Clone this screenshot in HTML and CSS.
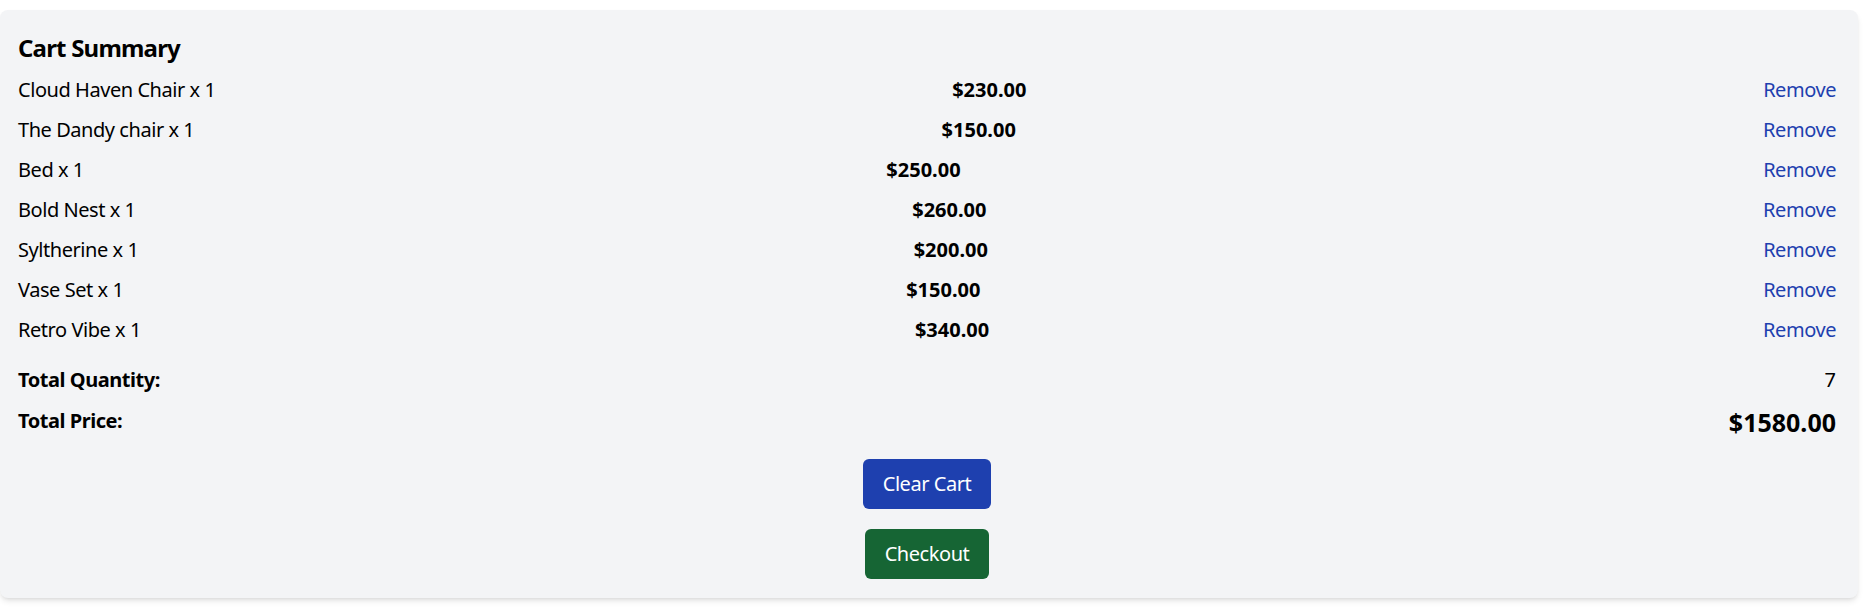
FILE: index.html
```html
<!DOCTYPE html>
<html lang="en">
<head>
<meta charset="utf-8">
<title>Cart Summary</title>
<link rel="stylesheet" href="styles.css">
</head>
<body>
<div class="card">
  <h2 class="title">Cart Summary</h2>
  <ul class="items">
    <li class="item"><span class="name">Cloud Haven Chair x 1</span><span class="price">$230.00</span><a class="remove" href="#">Remove</a></li>
    <li class="item"><span class="name">The Dandy chair x 1</span><span class="price">$150.00</span><a class="remove" href="#">Remove</a></li>
    <li class="item"><span class="name">Bed x 1</span><span class="price">$250.00</span><a class="remove" href="#">Remove</a></li>
    <li class="item"><span class="name">Bold Nest x 1</span><span class="price">$260.00</span><a class="remove" href="#">Remove</a></li>
    <li class="item"><span class="name">Syltherine x 1</span><span class="price">$200.00</span><a class="remove" href="#">Remove</a></li>
    <li class="item"><span class="name">Vase Set x 1</span><span class="price">$150.00</span><a class="remove" href="#">Remove</a></li>
    <li class="item"><span class="name">Retro Vibe x 1</span><span class="price">$340.00</span><a class="remove" href="#">Remove</a></li>
  </ul>
  <div class="totals">
    <div class="total-row"><span class="label">Total Quantity:</span><span class="qty">7</span></div>
    <div class="total-row price-row"><span class="label">Total Price:</span><span class="grand">$1580.00</span></div>
  </div>
  <div class="actions">
    <button class="btn btn-clear">Clear Cart</button>
    <button class="btn btn-checkout">Checkout</button>
  </div>
</div>
</body>
</html>
```
FILE: styles.css
```css
html, body {
  margin: 0;
  padding: 0;
  background: #ffffff;
}
body {
  font-family: "Noto Sans", "Open Sans", sans-serif;
  color: #000;
}
.card {
  box-sizing: border-box;
  width: 1858px;
  margin: 10px 12px 9px 0;
  padding: 20px 22px 19px 18px;
  background: #f3f4f6;
  border-radius: 8px;
  box-shadow: 0 4px 6px -1px rgba(0,0,0,0.1), 0 2px 4px -2px rgba(0,0,0,0.1);
}
.title {
  margin: 0 0 5px;
  font-size: 24px;
  line-height: 35px;
  font-weight: 700;
  letter-spacing: -0.8px;
}
.items {
  list-style: none;
  margin: 0;
  padding: 0;
}
.item {
  display: flex;
  justify-content: space-between;
  align-items: center;
  padding: 5px 0;
  font-size: 20px;
  line-height: 30px;
}
.name,
.remove,
.label,
.btn {
  letter-spacing: -0.45px;
}
.price {
  font-weight: 700;
}
.remove {
  color: #1e40af;
  text-decoration: none;
}
.totals {
  margin-top: 15px;
}
.total-row {
  display: flex;
  justify-content: space-between;
  align-items: flex-start;
  font-size: 20px;
  line-height: 30px;
}
.label {
  font-weight: 700;
}
.price-row {
  margin-top: 11px;
}
.grand {
  font-size: 25px;
  line-height: 32px;
  font-weight: 700;
}
.actions {
  margin-top: 21px;
  display: flex;
  flex-direction: column;
  align-items: center;
  gap: 20px;
}
.btn {
  font-family: inherit;
  font-size: 20px;
  line-height: 30px;
  padding: 10px 20px;
  border: none;
  border-radius: 6px;
  color: #fff;
  cursor: pointer;
}
.btn-clear {
  background: #1e40af;
}
.btn-checkout {
  background: #166534;
}
```
